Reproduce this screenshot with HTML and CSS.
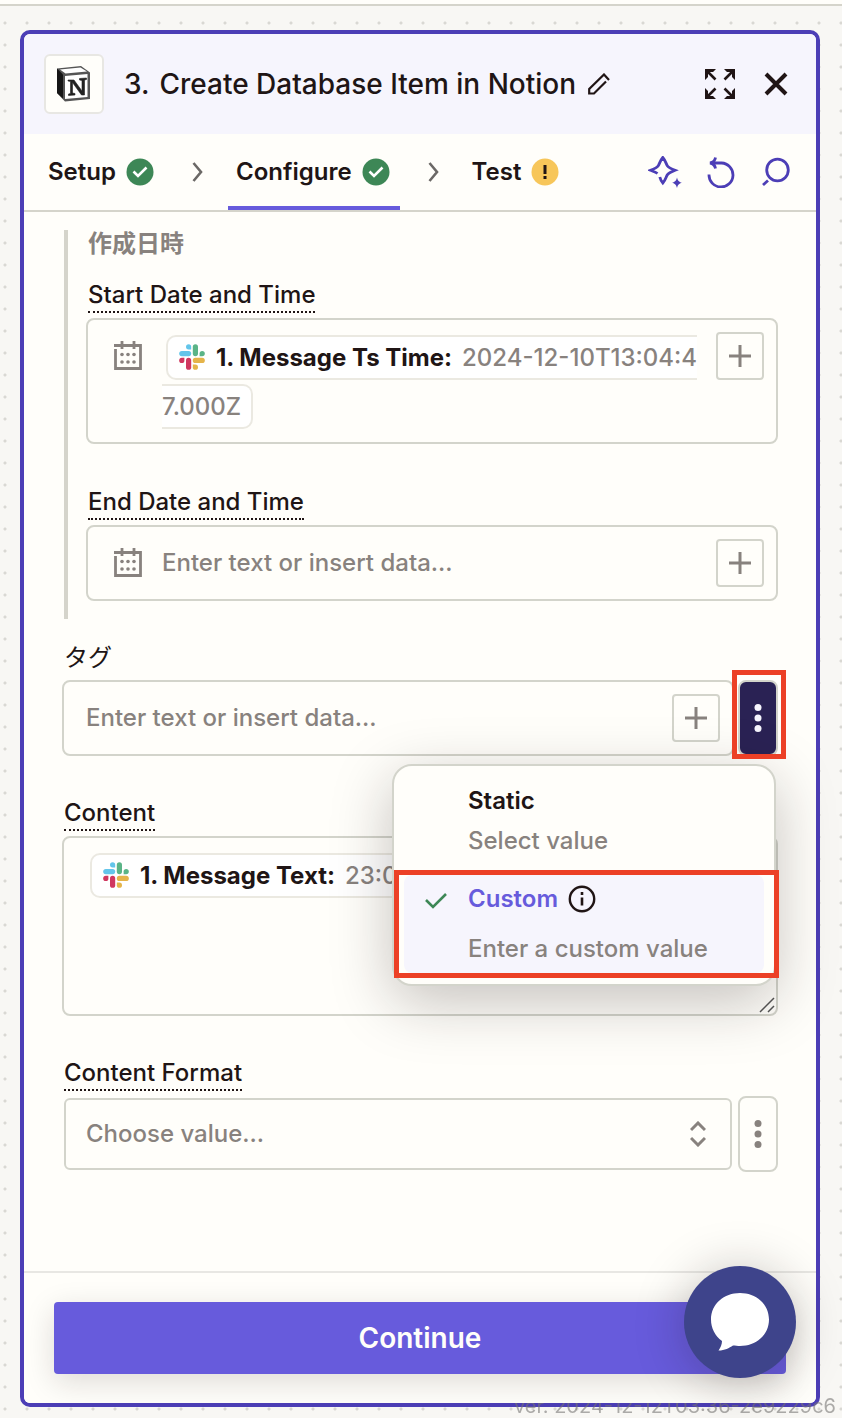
FILE: index.html
```html
<!DOCTYPE html>
<html lang="en">
<head>
    <meta charset="UTF-8">
    <meta name="viewport" content="width=device-width, initial-scale=1">
    <title>Create Database Item in Notion</title>
    <link rel="stylesheet" href="styles.css">
</head>
<body>
    <!-- icons used more than once -->
    <svg class="sprite" aria-hidden="true">
        <symbol id="calendar" viewBox="0 0 28 30">
            <path d="M0 4.500h26.500v23H1.500V8M8 0v8M20 0v8" fill="none" stroke="currentColor" stroke-width="2.800"/>
            <g fill="currentColor">
                <circle cx="8" cy="13.500" r="1.800"/><circle cx="14" cy="13.500" r="1.800"/><circle cx="20" cy="13.500" r="1.800"/>
                <circle cx="8" cy="21" r="1.800"/><circle cx="14" cy="21" r="1.800"/><circle cx="20" cy="21" r="1.800"/>
            </g>
        </symbol>
        <symbol id="slack" viewBox="0 0 26 26">
            <g fill="none" stroke-width="5.200" stroke-linecap="round">
                <path d="M2.800 9.600h6.800" stroke="#63c5ea"/>
                <path d="M16.400 2.800v6.800" stroke="#5ab487"/>
                <path d="M16.400 16.400h6.800" stroke="#e5b44a"/>
                <path d="M9.600 16.400v6.800" stroke="#d0375f"/>
            </g>
            <path d="M12.200 5.400H9.600A2.600 2.600 0 1 1 12.200 2.800z" fill="#63c5ea"/>
            <path d="M20.600 12.200V9.600a2.600 2.600 0 1 1 2.600 2.600z" fill="#5ab487"/>
            <path d="M13.800 20.600h2.600a2.600 2.600 0 1 1-2.600 2.600z" fill="#e5b44a"/>
            <path d="M5.400 13.800v2.600a2.600 2.600 0 1 1-2.600-2.600z" fill="#d0375f"/>
        </symbol>
        <symbol id="plus" viewBox="0 0 22 22">
            <path d="M11 0v22M0 11h22" stroke="currentColor" stroke-width="3"/>
        </symbol>
        <symbol id="dots" viewBox="0 0 8 28">
            <g fill="currentColor"><circle cx="4" cy="3.500" r="3.500"/><circle cx="4" cy="14" r="3.500"/><circle cx="4" cy="24.500" r="3.500"/></g>
        </symbol>
        <symbol id="done" viewBox="0 0 28 28">
            <circle cx="14" cy="14" r="13.500" fill="#3d8756"/>
            <path d="M7.500 13.500l4.500 4.500 8.500-8.500" fill="none" stroke="#fff" stroke-width="2.600"/>
        </symbol>
        <symbol id="next" viewBox="0 0 12 20">
            <path d="M1.500 1l7.500 9-7.500 9" fill="none" stroke="#6b6866" stroke-width="2.600"/>
        </symbol>
    </svg>

    <div class="topbar"></div>

    <main class="editor">
        <header class="header">
            <span class="app-icon">
                <svg width="36" height="38" viewBox="0 0 36 38">
                    <path d="M1 3.500L25 1l9 6.500V34L9 36.500 1 28z" fill="#555"/>
                    <path d="M4 4.500l20.500-2L31 6.500 9.500 8.500z" fill="#fff"/>
                    <path d="M9 11L31.500 9v23L9 34z" fill="#fff"/>
                    <path d="M1 3.500l6 6v24L1 28z" fill="#161616"/>
                    <path d="M12 15h6l8 11V15.500l-2.500-.5v-1.500l7-.5v1.500l-2 .5v15h-3l-9-12.500V28l2.500.5V30l-6.500.5V29l2-.5v-12l-2.500-.5z" fill="#222" stroke="#222" stroke-width=".6"/>
                </svg>
            </span>
            <h1 class="title"><span>3.</span> <span>Create Database Item in Notion</span></h1>
            <button class="icon-btn edit" aria-label="Rename step">
                <svg width="22" height="22" viewBox="0 0 22 22" fill="none" stroke="currentColor" stroke-width="2.200">
                    <path d="M18 8.500L6 20.500H1.200V16L16 1.500l5 5.500"/>
                </svg>
            </button>
            <button class="icon-btn expand" aria-label="Expand">
                <svg width="30" height="30" viewBox="0 0 30 30">
                    <path d="M2 2l8.500 8.500M28 2l-8.500 8.500M2 28l8.500-8.500M28 28l-8.500-8.500" stroke="currentColor" stroke-width="2.600"/>
                    <path d="M0 0h11L8 3H3v5l-3 3zM30 0v11l-3-3V3h-5l-3-3zM0 30V19l3 3v5h5l3 3zM30 30H19l3-3h5v-5l3-3z" fill="currentColor"/>
                </svg>
            </button>
            <button class="icon-btn" aria-label="Close">
                <svg width="24" height="24" viewBox="0 0 24 24">
                    <path d="M2 2l20 20M22 2L2 22" stroke="currentColor" stroke-width="4"/>
                </svg>
            </button>
        </header>

        <nav class="tabs">
            <button class="tab">Setup <svg width="28" height="28"><use href="#done"/></svg></button>
            <svg class="next" width="12" height="20"><use href="#next"/></svg>
            <button class="tab active">Configure <svg width="28" height="28"><use href="#done"/></svg></button>
            <svg class="next" width="12" height="20"><use href="#next"/></svg>
            <button class="tab">Test
                <svg width="28" height="28" viewBox="0 0 28 28">
                    <circle cx="14" cy="14" r="13.500" fill="#f7c65a"/>
                    <path d="M14 7v9M14 18v3" stroke="#201515" stroke-width="3"/>
                </svg>
            </button>
            <div class="tools">
                <button class="icon-btn" aria-label="Copilot">
                    <svg width="34" height="32" viewBox="0 0 34 32">
                        <path d="M9.500 17.500C8 16.300 5.500 15.500 2.500 14.300c4-1.600 6.500-2.800 7.800-4.600C11.500 8 11.800 5 14.800 1.500c3 3.500 3.300 6.500 4.500 8.200 1.300 1.800 3.800 3 7.800 4.600-4 1.600-6.500 2.800-7.800 4.600-1.200 1.700-1.500 4.600-4.500 8.100-1.600-2-2.500-4-3-6" fill="none" stroke="currentColor" stroke-width="2.800"/>
                        <path d="M29 21.500c1 3.500 1.800 4.300 5 5.300-3.200 1-4 1.700-5 5.200-1-3.500-1.800-4.200-5-5.200 3.200-1 4-1.800 5-5.300z" fill="currentColor"/>
                    </svg>
                </button>
                <button class="icon-btn" aria-label="Undo">
                    <svg width="30" height="32" viewBox="0 0 30 32" fill="none" stroke="currentColor" stroke-width="2.800">
                        <path d="M3 7h11.500A12 12 0 1 1 2 18.500M8.500 1.500C8 4.500 6 6.500 3 7c3 .5 5 2.500 5.500 5.500"/>
                    </svg>
                </button>
                <button class="icon-btn" aria-label="Search">
                    <svg width="28" height="30" viewBox="0 0 28 30" fill="none" stroke="currentColor" stroke-width="2.800">
                        <circle cx="15.500" cy="13" r="10.800"/><path d="M1 28l5-4.500"/>
                    </svg>
                </button>
            </div>
        </nav>

        <form class="body">
            <fieldset class="group">
                <legend class="group-title">作成日時</legend>
                <div class="row">
                    <span class="label hint" id="start">Start Date and Time</span>
                    <div class="field dated">
                        <svg class="cal" width="28" height="30"><use href="#calendar"/></svg>
                        <div class="value" role="textbox" aria-labelledby="start" contenteditable="true" spellcheck="false"><span class="pill"><svg width="26" height="26"><use href="#slack"/></svg><b>1. Message Ts Time:</b>2024-12-10T13:04:47.000Z</span></div>
                        <button type="button" class="add" aria-label="Insert data"><svg width="22" height="22"><use href="#plus"/></svg></button>
                    </div>
                </div>
                <div class="row">
                    <label class="label hint" for="end">End Date and Time</label>
                    <div class="field dated">
                        <svg class="cal" width="28" height="30"><use href="#calendar"/></svg>
                        <input id="end" type="text" placeholder="Enter text or insert data...">
                        <button type="button" class="add" aria-label="Insert data"><svg width="22" height="22"><use href="#plus"/></svg></button>
                    </div>
                </div>
            </fieldset>

            <div class="row">
                <label class="label plain" for="tag">タグ</label>
                <div class="line">
                    <div class="field">
                        <input id="tag" type="text" placeholder="Enter text or insert data...">
                        <button type="button" class="add" aria-label="Insert data"><svg width="22" height="22"><use href="#plus"/></svg></button>
                    </div>
                    <div class="more-wrap marked">
                        <button type="button" class="more open" aria-label="Field options"><svg width="8" height="28"><use href="#dots"/></svg></button>
                        <div class="menu">
                            <button type="button" class="option">
                                <span class="name">Static</span>
                                <span class="desc">Select value</span>
                            </button>
                            <button type="button" class="option selected marked">
                                <svg class="tick" width="22" height="16" viewBox="0 0 22 16"><path d="M1 7l7 7L21 1" fill="none" stroke="#3d8756" stroke-width="2.600"/></svg>
                                <span class="name">Custom
                                    <svg width="28" height="28" viewBox="0 0 28 28">
                                        <circle cx="14" cy="14" r="12.200" fill="none" stroke="#201515" stroke-width="2.400"/>
                                        <path d="M14 7v3M14 12.500v8" stroke="#201515" stroke-width="2.600"/>
                                    </svg>
                                </span>
                                <span class="desc">Enter a custom value</span>
                            </button>
                        </div>
                    </div>
                </div>
            </div>

            <div class="row">
                <span class="label hint" id="content">Content</span>
                <div class="field area">
                    <div class="value" role="textbox" aria-labelledby="content" contenteditable="true" spellcheck="false"><span class="pill"><svg width="26" height="26"><use href="#slack"/></svg><b>1. Message Text:</b>23:00</span></div>
                    <svg class="grip" width="16" height="16" viewBox="0 0 16 16"><path d="M1 15L15 1M9 15l6-6" stroke="#555" stroke-width="1.500"/></svg>
                </div>
            </div>

            <div class="row">
                <label class="label hint" for="format">Content Format</label>
                <div class="line">
                    <div class="select">
                        <select id="format"><option>Choose value...</option></select>
                        <svg width="16" height="26" viewBox="0 0 16 26" fill="none" stroke="currentColor" stroke-width="3"><path d="M1 9l7-7 7 7M1 17l7 7 7-7"/></svg>
                    </div>
                    <button type="button" class="more" aria-label="Field options"><svg width="8" height="28"><use href="#dots"/></svg></button>
                </div>
            </div>
        </form>

        <footer class="footer">
            <button class="continue">Continue</button>
        </footer>
    </main>

    <div class="version">ver. 2024-12-12T03:36-2e9229c6</div>
    <button class="chat" aria-label="Open chat">
        <svg width="58" height="58" viewBox="0 0 58 58"><path d="M29 0c16 0 29 11 29 26.500S45 53 29 53c-2 0-5-.5-7-.5-4 2.500-8 5-14.500 5 2-3 3.500-6 3.500-9.500C4 43 0 35 0 26.500 0 11 13 0 29 0z" fill="#fff"/></svg>
    </button>
</body>
</html>
```
FILE: styles.css
```css
* {
    box-sizing: border-box;
}

body {
    margin: 0;
    min-height: 100vh;
    display: flex;
    flex-direction: column;
    /* dotted canvas, 22px grid */
    background: #f8f7f4 radial-gradient(circle, #d9d8d3 1px, transparent 2px) -6px 12px / 22px 22px;
    color: #201515;
    font: 500 24px/30px Inter, "Noto Sans CJK JP", sans-serif;
}

button, input, select {
    margin: 0;
    padding: 0;
    border: 0;
    background: none;
    color: inherit;
    font: inherit;
}

svg {
    display: block;
    flex: none;
}

.sprite {
    position: absolute;
    width: 0;
    height: 0;
}

.topbar {
    height: 6px;
    border-bottom: 2px solid #d5d4cb;
    background: #fffefa;
}

.editor {
    flex: 1;
    display: flex;
    flex-direction: column;
    margin: 24px 22px 11px 20px;
    border: 4px solid #4c3eb6;
    border-radius: 10px;
    background: #fffefa;
}

/* header */
.header {
    display: flex;
    align-items: center;
    height: 100px;
    padding: 0 28px 0 20px;
    border-radius: 6px 6px 0 0;
    background: #f6f5fd;
}

.app-icon {
    display: flex;
    align-items: center;
    justify-content: center;
    width: 60px;
    height: 60px;
    border: 2px solid #e8e7e3;
    border-radius: 6px;
    background: #fffefa;
}

.title {
    display: flex;
    gap: 10px;
    margin: 0 12px 0 20px;
    font-size: 28px;
    font-weight: 500;
}

.expand {
    margin: 0 29px 0 auto;
}

/* steps */
.tabs {
    display: flex;
    align-items: center;
    height: 78px;
    padding: 0 26px 0 16px;
    border-bottom: 2px solid #d5d4cb;
}

.tab {
    display: flex;
    align-items: center;
    gap: 10px;
    height: 76px;
    padding: 0 10px 0 8px;
    border: solid transparent;
    border-width: 4px 0;
    font-weight: 600;
}

.tab.active {
    border-bottom-color: #675bdc;
}

.next {
    margin: 0 24px 0 28px;
}

.tools {
    display: flex;
    align-items: center;
    gap: 25px;
    margin-left: auto;
    color: #4c3eb6;
}

/* fields */
.body {
    flex: 1;
    display: flex;
    flex-direction: column;
    gap: 41px;
    padding: 18px 38px;
}

.group {
    display: flex;
    flex-direction: column;
    gap: 42px;
    min-width: 0;
    margin: 0 0 -18px 2px;
    padding: 0 0 18px 18px;
    border: 0;
    border-left: 4px solid #d5d4cb;
}

.group-title {
    float: left;
    margin-bottom: -21px;
    padding: 0 0 0 2px;
    color: #88827e;
    font-weight: 700;
    line-height: 28px;
}

.label {
    display: block;
    width: fit-content;
    margin: 0 0 5px 2px;
    border-bottom: 2px dotted transparent;
    line-height: 32px;
}

.hint {
    border-bottom-color: #201515;
}

.plain {
    font-weight: 400;
    line-height: 31px;
}

.field {
    display: flex;
    align-items: flex-start;
    flex: 1;
    min-height: 76px;
    padding: 12px 12px 12px 22px;
    border: 2px solid #d3d4cb;
    border-radius: 8px;
}

.dated {
    padding-left: 26px;
}

.cal {
    margin: 9px 20px 0 0;
    color: #88827e;
}

.field input {
    flex: 1;
    min-width: 0;
    height: 48px;
    padding-bottom: 2px;
    outline: 0;
}

.field input::placeholder {
    color: #88827e;
    opacity: 1;
}

.value {
    flex: 1;
    min-width: 0;
    margin: 1px 16px -1px 0;
    color: #88827e;
    line-height: 49px;
    word-break: break-all;
    outline: 0;
}

.pill {
    margin-left: 4px;
    padding: 6px 10px 6px 11px;
    border: 2px solid #ebe9e1;
    border-radius: 10px;
    background: #fff;
}

.pill svg {
    display: inline-block;
    margin-right: 11px;
    vertical-align: -4px;
}

.pill b {
    margin-right: 10px;
    color: #201515;
    font-weight: 700;
}

.add {
    display: flex;
    align-items: center;
    justify-content: center;
    width: 48px;
    height: 48px;
    border: 2px solid #d3d4cb;
    border-radius: 4px;
    color: #88827e;
}

.area {
    position: relative;
    min-height: 180px;
}

.grip {
    position: absolute;
    right: 1px;
    bottom: 1px;
}

.line {
    display: flex;
    gap: 4px;
}

.select {
    position: relative;
    flex: 1;
    margin: 2px;
    color: #88827e;
}

.select select {
    width: 100%;
    height: 72px;
    padding: 0 60px 0 20px;
    border: 2px solid #d3d4cb;
    border-radius: 6px;
    appearance: none;
}

.select svg {
    position: absolute;
    top: 23px;
    right: 26px;
    pointer-events: none;
}

.more {
    display: flex;
    align-items: center;
    justify-content: center;
    width: 40px;
    height: 76px;
    border: 2px solid #d3d4cb;
    border-radius: 8px;
    color: #88827e;
}

.more.open {
    background: #2a2254;
    color: #f6f5fd;
}

/* field mode menu */
.more-wrap {
    position: relative;
}

.menu {
    position: absolute;
    z-index: 1;
    top: 84px;
    right: 2px;
    width: 384px;
    padding: 8px 10px 11px;
    border: 2px solid #d3d4cb;
    border-radius: 20px;
    background: #fffefa;
    box-shadow: 0 16px 60px rgba(32, 21, 21, .26);
}

.option {
    position: relative;
    display: block;
    width: 100%;
    padding: 7px 0 14px 64px;
    border-radius: 8px;
    text-align: left;
}

.option.selected {
    padding: 4px 0 4px 64px;
    background: #f6f5fd;
}

.name {
    display: flex;
    align-items: center;
    gap: 10px;
    height: 40px;
    font-weight: 600;
}

.desc {
    display: block;
    color: #88827e;
    line-height: 40px;
}

.selected .name {
    color: #675bdc;
}

.selected .desc {
    padding-top: 10px;
}

.tick {
    position: absolute;
    top: 18px;
    left: 21px;
}

/* red callout frames */
.marked::after {
    content: "";
    position: absolute;
    z-index: 2;
    inset: -10px -8px -3px -6px;
    border: 5px solid #ec4026;
    pointer-events: none;
}

.option.marked::after {
    inset: -5px -15px -5px -10px;
}

/* footer, stays above the version text */
.footer {
    position: relative;
    z-index: 1;
    padding: 29px 30px;
    border-top: 2px solid #e8e7e3;
    border-radius: 0 0 6px 6px;
    background: #fffefa;
}

.continue {
    display: block;
    width: 100%;
    height: 72px;
    border-radius: 4px;
    background: #675bdc;
    box-shadow: 0 8px 30px rgba(32, 21, 21, .15);
    color: #fffefa;
    font-size: 28px;
    font-weight: 600;
}

.version {
    position: fixed;
    right: 6px;
    bottom: 0;
    color: rgba(120, 118, 116, .6);
    font-size: 20px;
    font-weight: 400;
    line-height: 24px;
}

.chat {
    position: fixed;
    z-index: 2;
    right: 46px;
    bottom: 40px;
    display: flex;
    align-items: center;
    justify-content: center;
    width: 112px;
    height: 112px;
    border-radius: 50%;
    background: #3e448b;
    box-shadow: 0 4px 50px rgba(32, 21, 21, .26);
}
```
